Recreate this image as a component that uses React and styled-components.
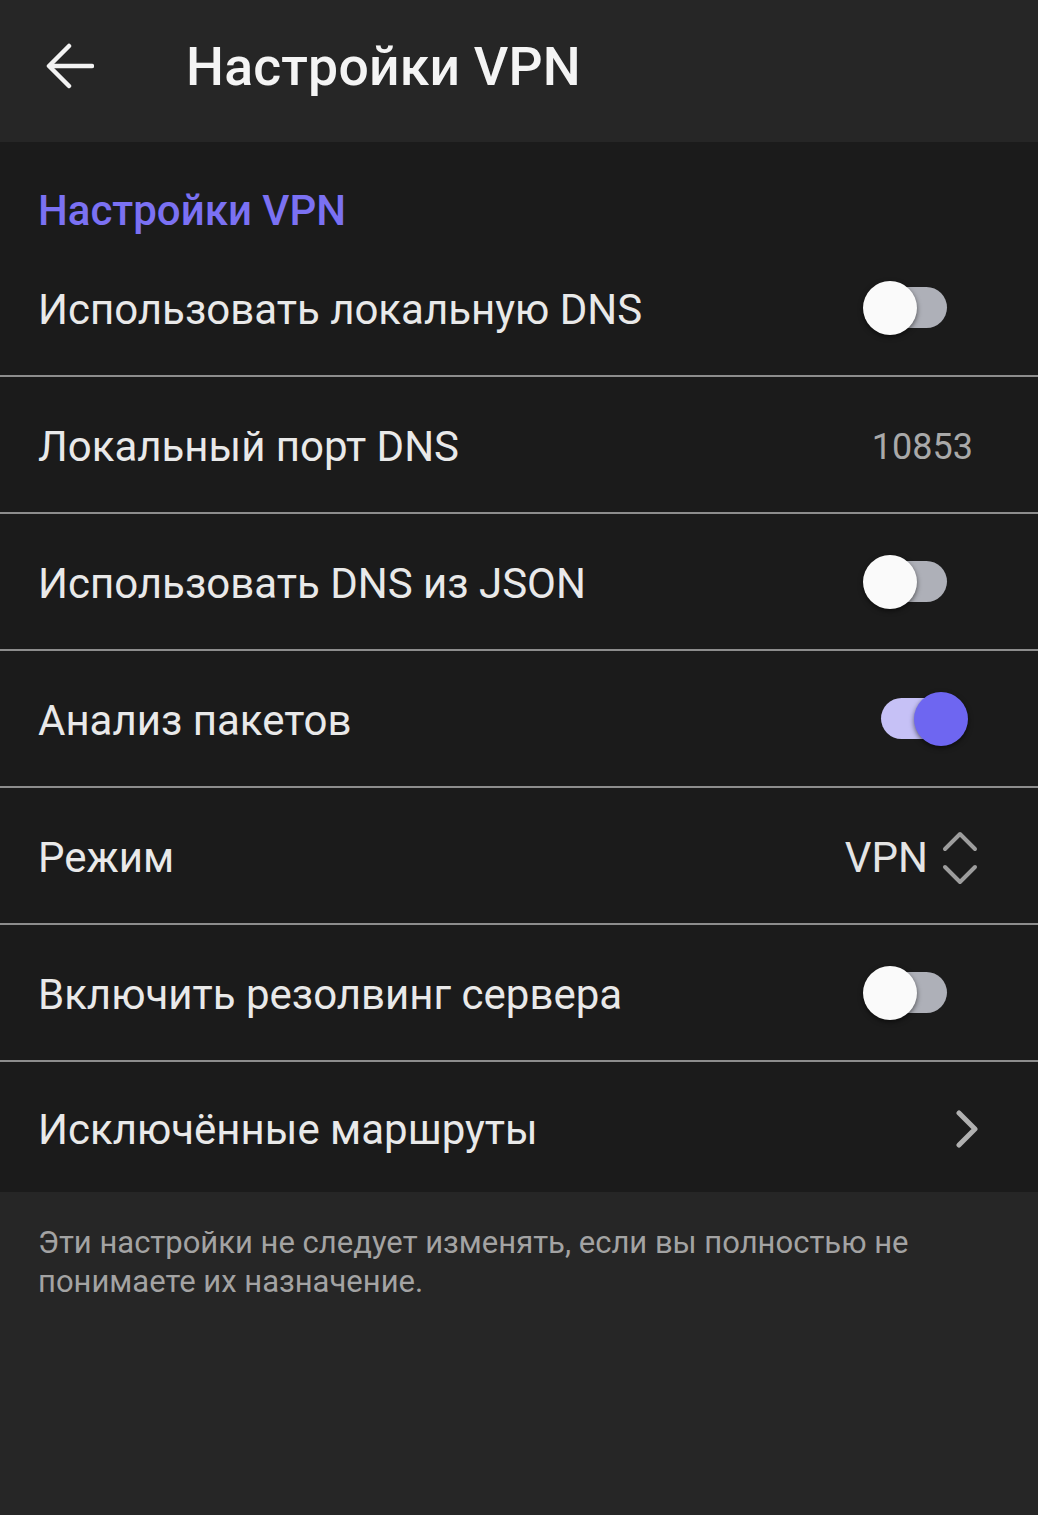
import React, { useState } from "react";
import styled, { createGlobalStyle } from "styled-components";

const GlobalStyle = createGlobalStyle`
    html, body {
        margin: 0;
        padding: 0;
        background: #1b1b1b;
    }
    body {
        font-family: Roboto, "Noto Sans", "Liberation Sans", sans-serif;
        -webkit-font-smoothing: antialiased;
    }
`;

const Page = styled.div`
    display: flex;
    flex-direction: column;
    width: 1038px;
    min-height: 1515px;
    background: #262626;
`;

const Toolbar = styled.header`
    display: flex;
    align-items: center;
    height: 142px;
    padding: 0 0 10px 44px;
    box-sizing: border-box;
    background: #262626;
`;

const BackButton = styled.button`
    display: flex;
    align-items: center;
    justify-content: center;
    width: 52px;
    height: 52px;
    padding: 0;
    border: none;
    background: transparent;
    color: #f2f2f2;
    cursor: pointer;
`;

const ToolbarTitle = styled.h1`
    margin: 0 0 0 90px;
    font-size: 53.5px;
    font-weight: 500;
    color: #f4f4f4;
    letter-spacing: 0.2px;
`;

const Section = styled.section`
    display: flex;
    flex-direction: column;
    background: #1b1b1b;
`;

const SectionTitle = styled.h2`
    display: flex;
    align-items: center;
    height: 98px;
    margin: 0;
    padding: 38px 38px 0;
    box-sizing: border-box;
    font-size: 42px;
    font-weight: 500;
    color: #7b71f3;
`;

const Row = styled.div`
    display: flex;
    align-items: center;
    justify-content: space-between;
    height: ${p => (p.$last ? "130px" : "137px")};
    padding: 4px 0 0 38px;
    box-sizing: border-box;
    border-bottom: ${p => (p.$last ? "none" : "2px solid #8d8d8d")};
`;

const RowLabel = styled.span`
    font-size: 42px;
    color: #e9e9e9;
`;

const RowValue = styled.span`
    margin-right: 65px;
    font-size: 36px;
    color: #a9a9a9;
`;

const SelectValue = styled.div`
    display: flex;
    align-items: center;
    gap: 14px;
    margin-right: 60px;
    font-size: 42px;
    color: #e4e4e4;
`;

const ChevronWrap = styled.span`
    display: flex;
    margin-right: 60px;
    color: #b0b0b0;
`;

const SwitchBox = styled.button`
    position: relative;
    width: 104px;
    height: 60px;
    margin: -4px 71px 0 0;
    padding: 0;
    border: none;
    background: transparent;
    cursor: pointer;
`;

const SwitchTrack = styled.span`
    position: absolute;
    left: 18px;
    top: 9px;
    width: 66px;
    height: 41px;
    border-radius: 21px;
    background: ${p => (p.$on ? "#c6c1f6" : "#aeb0b8")};
`;

const SwitchThumb = styled.span`
    position: absolute;
    top: 3px;
    left: ${p => (p.$on ? "51px" : "0")};
    width: 54px;
    height: 54px;
    border-radius: 50%;
    background: ${p => (p.$on ? "#6e66f1" : "#fafafa")};
    box-shadow: 0 2px 5px rgba(0, 0, 0, 0.55);
    transition: left 150ms ease-in-out;
`;

const Footer = styled.footer`
    flex: 1;
    padding: 31px 38px 40px;
    background: #262626;
`;

const FooterText = styled.p`
    margin: 0;
    max-width: 940px;
    font-size: 31px;
    line-height: 39px;
    color: #a3a3a3;
`;

const Switch = ({ on, onToggle }) => (
    <SwitchBox onClick={onToggle} aria-pressed={on}>
        <SwitchTrack $on={on} />
        <SwitchThumb $on={on} />
    </SwitchBox>
);

const ArrowBack = () => (
    <svg width="48" height="46" viewBox="0 0 48 46" fill="none" stroke="currentColor" strokeWidth="4.5" strokeLinecap="round" strokeLinejoin="round">
        <path d="M46 23H5" />
        <path d="M23 3L3 23l20 20" />
    </svg>
);

const UpDown = () => (
    <svg width="36" height="56" viewBox="0 0 36 56" fill="none" stroke="#9d9d9d" strokeWidth="4" strokeLinecap="round" strokeLinejoin="round">
        <path d="M3 19L18 4l15 15" />
        <path d="M3 37l15 15 15-15" />
    </svg>
);

const ChevronRight = () => (
    <svg width="22" height="38" viewBox="0 0 22 38" fill="none" stroke="currentColor" strokeWidth="5" strokeLinecap="round" strokeLinejoin="round">
        <path d="M3 3l16 16L3 35" />
    </svg>
);

const App = () => {
    const [flags, setFlags] = useState({
        localDns: false,
        jsonDns: false,
        sniffing: true,
        resolve: false,
    });

    const toggle = key => setFlags(f => ({ ...f, [key]: !f[key] }));

    return (
        <Page>
            <GlobalStyle />
            <Toolbar>
                <BackButton aria-label="Назад">
                    <ArrowBack />
                </BackButton>
                <ToolbarTitle>Настройки VPN</ToolbarTitle>
            </Toolbar>
            <Section>
                <SectionTitle>Настройки VPN</SectionTitle>
                <Row>
                    <RowLabel>Использовать локальную DNS</RowLabel>
                    <Switch on={flags.localDns} onToggle={() => toggle("localDns")} />
                </Row>
                <Row>
                    <RowLabel>Локальный порт DNS</RowLabel>
                    <RowValue>10853</RowValue>
                </Row>
                <Row>
                    <RowLabel>Использовать DNS из JSON</RowLabel>
                    <Switch on={flags.jsonDns} onToggle={() => toggle("jsonDns")} />
                </Row>
                <Row>
                    <RowLabel>Анализ пакетов</RowLabel>
                    <Switch on={flags.sniffing} onToggle={() => toggle("sniffing")} />
                </Row>
                <Row>
                    <RowLabel>Режим</RowLabel>
                    <SelectValue>
                        VPN
                        <UpDown />
                    </SelectValue>
                </Row>
                <Row>
                    <RowLabel>Включить резолвинг сервера</RowLabel>
                    <Switch on={flags.resolve} onToggle={() => toggle("resolve")} />
                </Row>
                <Row $last>
                    <RowLabel>Исключённые маршруты</RowLabel>
                    <ChevronWrap>
                        <ChevronRight />
                    </ChevronWrap>
                </Row>
            </Section>
            <Footer>
                <FooterText>
                    Эти настройки не следует изменять, если вы полностью не понимаете их назначение.
                </FooterText>
            </Footer>
        </Page>
    );
};

export default App;
